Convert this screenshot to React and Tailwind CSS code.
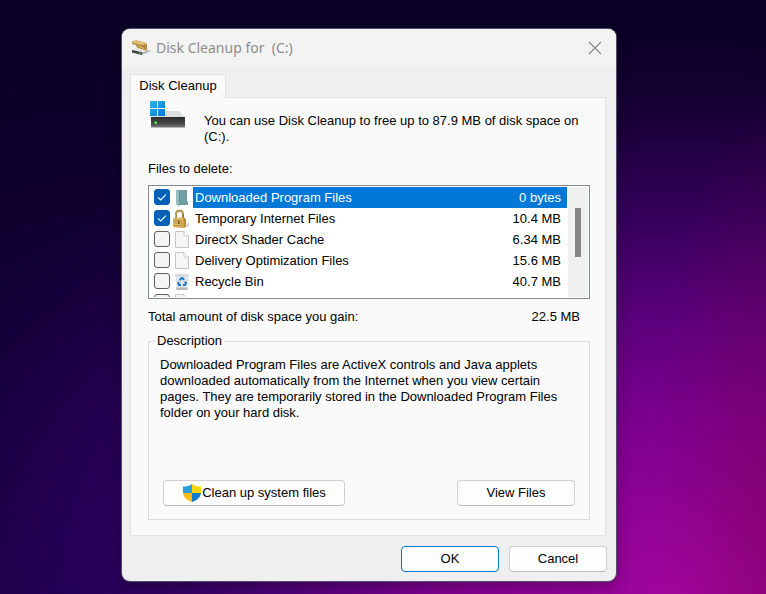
import { useState } from 'react';

const initialFiles = [
  { name: 'Downloaded Program Files', size: '0 bytes', icon: 'folder', checked: true },
  { name: 'Temporary Internet Files', size: '10.4 MB', icon: 'lock', checked: true },
  { name: 'DirectX Shader Cache', size: '6.34 MB', icon: 'page', checked: false },
  { name: 'Delivery Optimization Files', size: '15.6 MB', icon: 'page', checked: false },
  { name: 'Recycle Bin', size: '40.7 MB', icon: 'bin', checked: false },
  { name: '', size: '', icon: 'page', checked: false },
];

function CleanupIcon() {
  return (
    <svg width="20" height="16" viewBox="0 0 20 16" aria-hidden="true">
      <path d="M1 10 7 6.500 19 10 11 12.500Z" fill="#e6e6e6" />
      <path d="M1 10 11 12.300V15L1 12.500Z" fill="#3a403a" />
      <path d="M11 12.300 19 10V11.500L11 15Z" fill="#b5b5b5" />
      <path d="M8 12.800 10 13.300" stroke="#35c46a" strokeWidth="1.200" />
      <path d="M1 1 6 0.500 14 2.500 16 4V10.500L13 10 6 7.500 5 5 1 4Z" fill="#b08a3e" />
      <path d="M1 1 6 0.700 14 2.700 15.500 4 10.500 5 6 3.800 1.500 3Z" fill="#e2c27a" />
      <path d="m7 6 6 2.500" stroke="#d8b971" strokeWidth="1.200" />
    </svg>
  );
}

function DriveIcon() {
  return (
    <svg width="38" height="30" viewBox="0 0 38 30" aria-hidden="true">
      <defs>
        <linearGradient id="win" x1="0" y1="0" x2="1" y2="1">
          <stop offset="0" stopColor="#2fb4ec" />
          <stop offset="1" stopColor="#0674d4" />
        </linearGradient>
        <linearGradient id="front" x1="0" y1="0" x2="0" y2="1">
          <stop offset="0" stopColor="#2c2c2c" />
          <stop offset="0.6" stopColor="#484848" />
          <stop offset="1" stopColor="#7a7a7a" />
        </linearGradient>
      </defs>
      <path d="M8 11H30L36 18H2Z" fill="#dcdee2" />
      <rect x="2" y="17" width="34" height="10.500" fill="url(#front)" />
      <rect x="5.500" y="21.500" width="2.500" height="2.500" fill="#3df03d" />
      <path d="M0 0H16V16H0Z" fill="#fafafa" />
      <path d="M1 1h7v7H1zM9 1h7v7H9zM1 9h7v7H1zM9 9h7v7H9z" fill="url(#win)" />
    </svg>
  );
}

function FolderIcon() {
  return (
    <svg width="14" height="18" viewBox="0 0 14 18" aria-hidden="true">
      <path d="M2 1H12V12L13 13V16H2Z" fill="#6f9fa3" />
      <path d="M1 1 4.500 3V17.500L1 15.500Z" fill="#94bdc2" />
      <path d="M4.500 3V16" stroke="#5d8e94" strokeWidth="0.800" />
    </svg>
  );
}

function LockIcon() {
  return (
    <svg width="18" height="20" viewBox="0 0 18 20" aria-hidden="true">
      <path d="M11 18h5v-5z" fill="#d6d6d6" />
      <path d="M3 10V5.500C3 0.500 10 0.500 10 5.500V10" fill="none" stroke="#9c7a35" strokeWidth="2" />
      <path d="M2.800 9V5.500C3 1 9.500 1 10 5" fill="none" stroke="#d8c088" strokeWidth="0.800" />
      <path d="M0 9 11 8.500 13 10V17.500L11 19 0 18Z" fill="#b98a2f" />
      <path d="M0 9 10.500 9V18.500L0 18Z" fill="#dcb761" />
      <path d="M1 11.500h8.500M1 14h8.500M1 16.500h8.500" stroke="#b58c3a" strokeWidth="0.800" />
      <rect x="5" y="11.500" width="1.500" height="3.500" fill="#7b5a1c" />
    </svg>
  );
}

function PageIcon() {
  return (
    <svg width="16" height="19" viewBox="0 0 16 19" aria-hidden="true">
      <path d="M1.500 1.500H10L14.500 6V17.500H1.500Z" fill="#f6f6f6" stroke="#c6c6c6" />
      <path d="M10 1.500V6H14.500" fill="#ffffff" stroke="#c6c6c6" />
    </svg>
  );
}

function BinIcon() {
  return (
    <svg width="16" height="19" viewBox="0 0 16 19" aria-hidden="true">
      <path d="M1 2 3 1 5 2 7 0.800 9 2 12 1 14.500 2V4H1.500Z" fill="#e2e6ea" />
      <path d="M1.500 3.500H14.500L13.500 18H2.500Z" fill="#dfe5ea" />
      <path d="M2.400 15.500H13.700L13.500 18H2.500Z" fill="#b4babf" />
      <path d="M1.500 3.500H14.500" stroke="#c0c6cb" strokeDasharray="2 1" />
      <g fill="none" stroke="#1478d0" strokeWidth="1.900">
        <path d="M5.700 8.500 7.200 6.300H8.800L10 8" />
        <path d="M11 9.500 12 11.300 11 13H9" />
        <path d="M7 13H5L4.200 11.300 5 10" />
      </g>
    </svg>
  );
}

const icons = { folder: FolderIcon, lock: LockIcon, page: PageIcon, bin: BinIcon };

function ShieldIcon() {
  return (
    <svg width="20" height="20" viewBox="0 0 20 20" aria-hidden="true">
      <defs>
        <clipPath id="shield">
          <path d="M10 1C7.500 3 4.500 3.500 1 3.500V9C1 14 5 17.500 10 19C15 17.500 19 14 19 9V3.500C15.500 3.500 12.500 3 10 1Z" />
        </clipPath>
      </defs>
      <g clipPath="url(#shield)">
        <path d="M0 0H10V10H0Z" fill="#2a9fe0" />
        <path d="M10 0H20V10H10Z" fill="#ffd400" />
        <path d="M0 10H10V20H0Z" fill="#fdbb0c" />
        <path d="M10 10H20V20H10Z" fill="#1078d0" />
      </g>
    </svg>
  );
}

function FileRow({ file, selected, onToggle }) {
  const Icon = icons[file.icon];
  return (
    <li>
      <label className="flex h-[21px] items-start pl-1">
        <span className="mt-0.5 grid size-4 shrink-0">
          <input
            type="checkbox"
            checked={file.checked}
            onChange={onToggle}
            aria-label={file.name || 'More files'}
            className="col-start-1 row-start-1 size-4 appearance-none rounded-[3px] border border-[#5f5f5f] bg-[#f4f4f4] checked:border-[#0560b8] checked:bg-[#0560b8]"
          />
          {file.checked && (
            <svg className="pointer-events-none col-start-1 row-start-1" width="16" height="16" viewBox="0 0 16 16" aria-hidden="true">
              <path d="m4 8.300 2.700 2.700L12 5.700" fill="none" stroke="#ffffff" strokeWidth="1.100" />
            </svg>
          )}
        </span>
        <span className="flex h-[21px] w-[23px] shrink-0 items-center justify-center">
          <Icon />
        </span>
        <span
          className={
            selected
              ? 'flex h-[21px] flex-1 items-center justify-between bg-[#0078d7] pr-1.5 pl-0.5 text-white'
              : 'flex h-[21px] flex-1 items-center justify-between pr-1.5 pl-0.5'
          }
        >
          <span>{file.name}</span>
          <span>{file.size}</span>
        </span>
      </label>
    </li>
  );
}

export default function App() {
  const [files, setFiles] = useState(initialFiles);
  const toggle = (index) =>
    setFiles(files.map((file, i) => (i === index ? { ...file, checked: !file.checked } : file)));

  return (
    <div className="min-h-screen bg-[#0b0026] bg-[radial-gradient(18%_70%_at_103%_85%,#80004066_0%,transparent_100%),radial-gradient(45%_90%_at_10%_100%,#24006099_0%,transparent_100%),radial-gradient(100%_90%_at_89%_100%,#a2069e_0%,#7d008f_32%,#5a007c_52%,#310057_73%,#180036_90%,#0b0026_105%)] pt-[29px] pr-[150px] pb-[13px] pl-[122px] font-['Liberation_Sans',Arial,sans-serif] text-[13px] leading-4 text-black">
      <main className="overflow-hidden rounded-lg bg-[#efefef] shadow-[0_0_0_1px_#55506a,0_4px_16px_#00000055]">
        <header className="flex h-[37px] items-center justify-between bg-[#f3f3f3] pr-[14px] pl-[9px]">
          <div className="flex items-center gap-[5px]">
            <CleanupIcon />
            <h1 className="font-['Noto_Sans','Open_Sans',sans-serif] text-[14px] leading-5 whitespace-pre text-[#8c8c8c]">
              Disk Cleanup for  (C:)
            </h1>
          </div>
          <button type="button" aria-label="Close">
            <svg width="14" height="14" viewBox="0 0 14 14" aria-hidden="true">
              <path d="m1 1 12 12M13 1 1 13" stroke="#858585" strokeWidth="1.100" />
            </svg>
          </button>
        </header>

        <div className="px-2 pt-2 pb-[9px]">
          <div role="tablist" className="flex">
            <button
              type="button"
              role="tab"
              aria-selected="true"
              className="-mb-px h-6 w-24 border border-b-0 border-[#e2e2e2] bg-[#fafafa] pb-0.5"
            >
              Disk Cleanup
            </button>
          </div>

          <section className="mr-0.5 border border-t-0 border-[#e2e2e2] bg-[#fafafa]">
            <div className="ml-[94px] border-t border-[#e2e2e2]" />
            <div className="pr-[15px] pb-[15px] pl-[17px]">
              <div className="flex gap-[17px] pt-0.5 pl-px">
                <DriveIcon />
                <p className="flex-1 pt-[13px]">
                  You can use Disk Cleanup to free up to 87.9 MB of disk space on (C:).
                </p>
              </div>

              <h2 className="mt-4 mb-2" id="files-heading">Files to delete:</h2>
              <div className="flex h-[114px] overflow-hidden border border-[#828790] bg-white p-px">
                <ul aria-labelledby="files-heading" className="h-full flex-1 overflow-hidden">
                  {files.map((file, i) => (
                    <FileRow key={i} file={file} selected={i === 0} onToggle={() => toggle(i)} />
                  ))}
                </ul>
                <div className="ml-px flex w-5 justify-center bg-[#f0f0f0] pt-[21px]">
                  <div className="h-[49px] w-1.5 bg-[#868686]" />
                </div>
              </div>

              <div className="mt-[10px] flex justify-between pr-[10px]">
                <span>Total amount of disk space you gain:</span>
                <span>22.5 MB</span>
              </div>

              <fieldset className="mt-2 border border-[#dcdcdc] px-[11px] pb-[13px]">
                <legend className="ml-[-5px] px-0.5">Description</legend>
                <p className="mt-2 h-[123px]">
                  Downloaded Program Files are ActiveX controls and Java applets downloaded automatically from the
                  Internet when you view certain pages. They are temporarily stored in the Downloaded Program Files
                  folder on your hard disk.
                </p>
                <div className="flex justify-between px-[3px]">
                  <button
                    type="button"
                    className="flex h-[26px] w-[182px] items-center justify-center rounded-[4px] border border-[#d0d0d0] border-b-[#bcbcbc] bg-[#fdfdfd]"
                  >
                    <ShieldIcon />
                    Clean up system files
                  </button>
                  <button
                    type="button"
                    className="h-[26px] w-[118px] rounded-[4px] border border-[#d0d0d0] border-b-[#bcbcbc] bg-[#fdfdfd]"
                  >
                    View Files
                  </button>
                </div>
              </fieldset>
            </div>
          </section>

          <footer className="mt-[10px] mr-px flex justify-end gap-[10px]">
            <button type="button" className="h-[26px] w-[98px] rounded-[4px] border border-[#0078d4] bg-[#fdfdfd]">
              OK
            </button>
            <button
              type="button"
              className="h-[26px] w-[98px] rounded-[4px] border border-[#d0d0d0] border-b-[#bcbcbc] bg-[#fdfdfd]"
            >
              Cancel
            </button>
          </footer>
        </div>
      </main>
    </div>
  );
}
